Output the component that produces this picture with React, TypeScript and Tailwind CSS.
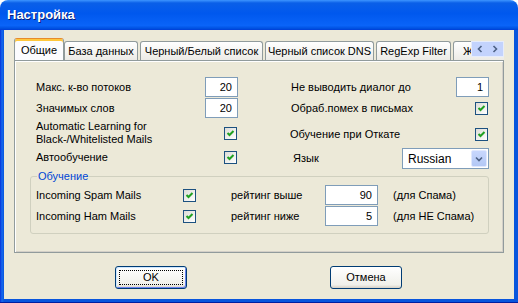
import React from "react";

const Check = () => (
  <span className="flex h-[13px] w-[13px] items-center justify-center border border-[#1c5180] bg-[linear-gradient(135deg,#dcdcd7,#ffffff)]">
    <svg width="9" height="9" viewBox="0 0 9 9">
      <path d="M1.5 4 L3.5 6 L7.5 2" fill="none" stroke="#21a121" strokeWidth="2" />
    </svg>
  </span>
);

const Field = ({ value, w }: { value: string; w: string }) => (
  <div
    className={`flex h-[20px] items-center justify-end border border-[#7f9db9] bg-white pr-[5px] ${w}`}
  >
    {value}
  </div>
);

const tabs = [
  { label: "База данных", w: "w-[74px]" },
  { label: "Черный/Белый список", w: "w-[123px]" },
  { label: "Черный список DNS", w: "w-[109px]" },
  { label: "RegExp Filter", w: "w-[75px]" },
  { label: "Журнал", w: "w-[60px]" },
];

const XpButton = ({ label, active }: { label: string; active?: boolean }) => (
  <button
    className={`relative flex h-[23px] w-[72px] items-center justify-center rounded-[3px] border border-[#003c74] bg-[linear-gradient(to_bottom,#ffffff,#f0f0ea_85%,#d6d0c5)] ${
      active
        ? "shadow-[inset_1px_1px_0_#cee7ff,inset_-1px_-1px_0_#6982ee]"
        : ""
    }`}
  >
    {active && (
      <span className="absolute inset-[3px] border border-dotted border-black" />
    )}
    {label}
  </button>
);

export default function App() {
  return (
    <div className="flex h-[303px] w-[518px] flex-col font-['Liberation_Sans',Arial,sans-serif] text-[11px] text-black">
      {/* title bar */}
      <div className="flex h-[30px] items-center rounded-t-[8px] bg-[linear-gradient(to_bottom,#3d95ff_0%,#0a5fe8_10%,#0058ee_45%,#0a64f8_85%,#0050e0_95%,#003dd7_100%)] pl-[7px]">
        <span className="text-[13px] font-bold text-white [text-shadow:1px_1px_0_#0a1e7a]">
          Настройка
        </span>
      </div>

      {/* frame */}
      <div className="flex flex-1 flex-col bg-[linear-gradient(to_right,#0831d9,#166aee_2px,#0855dd_4px)] px-[4px] pb-[4px] shadow-[inset_0_-1px_0_#001ea0]">
        <div className="flex flex-1 flex-col bg-[#ece9d8] pl-[10px] pt-[8px]">
          {/* tab strip */}
          <div className="relative flex h-[22px] w-[490px] items-end overflow-hidden">
            <div className="relative z-10 mb-[-1px] flex h-[23px] w-[50px] shrink-0 items-center justify-center rounded-t-[3px] border border-b-0 border-[#919b9c] border-t-[#e68b2c] bg-[#fcfcfe] shadow-[inset_0_2px_0_#ffc73c]">
              Общие
            </div>
            {tabs.map((t) => (
              <div
                key={t.label}
                className={`mr-[2px] flex h-[19px] shrink-0 items-center justify-center rounded-t-[3px] border border-b-0 border-[#919b9c] bg-[linear-gradient(to_bottom,#ffffff,#ecebe6)] ${t.w}`}
              >
                {t.label}
              </div>
            ))}
            <div className="absolute right-0 top-[3px] z-20 flex h-[16px] w-[33px] items-center justify-around border border-[#e6ecfb] bg-[#c3d3fd]">
              <svg width="6" height="8" viewBox="0 0 6 8">
                <path d="M4.5 1 L1.5 4 L4.5 7" fill="none" stroke="#4d6185" strokeWidth="1.6" />
              </svg>
              <svg width="6" height="8" viewBox="0 0 6 8">
                <path d="M1.5 1 L4.5 4 L1.5 7" fill="none" stroke="#4d6185" strokeWidth="1.6" />
              </svg>
            </div>
          </div>

          {/* panel */}
          <div className="flex h-[193px] w-[490px] flex-col border border-[#919b9c] bg-[#ece9d8] pt-[16px] shadow-[inset_1px_1px_0_#ffffff,inset_-1px_-1px_0_#d4d0c8]">
            <div className="flex pl-[21px]">
              {/* left column */}
              <div className="flex w-[202px] flex-col">
                <div className="flex h-[20px] items-center justify-between">
                  <span>Макс. к-во потоков</span>
                  <Field value="20" w="w-[33px]" />
                </div>
                <div className="mt-[1px] flex h-[20px] items-center justify-between">
                  <span>Значимых слов</span>
                  <Field value="20" w="w-[33px]" />
                </div>
                <div className="mt-[2px] flex h-[26px] items-center justify-between pr-[1px]">
                  <span className="leading-[13px]">
                    Automatic Learning for
                    <br />
                    Black-/Whitelisted Mails
                  </span>
                  <Check />
                </div>
                <div className="mt-[2px] flex h-[18px] items-center justify-between pr-[1px]">
                  <span>Автообучение</span>
                  <Check />
                </div>
              </div>

              {/* right column */}
              <div className="ml-[52px] flex w-[199px] flex-col">
                <div className="flex h-[20px] items-center justify-between pl-[1px]">
                  <span>Не выводить диалог до</span>
                  <Field value="1" w="w-[33px]" />
                </div>
                <div className="mt-[1px] flex h-[20px] items-center justify-between pl-[1px] pr-[1px]">
                  <span>Обраб.помех в письмах</span>
                  <Check />
                </div>
                <div className="mt-[6px] flex h-[20px] items-center justify-between pr-[1px]">
                  <span>Обучение при Откате</span>
                  <Check />
                </div>
                <div className="mt-[4px] flex h-[21px] items-center justify-between pl-[3px]">
                  <span>Язык</span>
                  <div className="flex h-[21px] w-[87px] items-center justify-between border border-[#7f9db9] bg-white pl-[5px] pr-[1px] text-[12px]">
                    <span>Russian</span>
                    <span className="flex h-[17px] w-[16px] items-center justify-center rounded-[2px] border border-[#e0e8fe] bg-[linear-gradient(to_bottom,#c8d7fd,#b3c8f5)]">
                      <svg width="8" height="6" viewBox="0 0 8 6">
                        <path d="M1 1.5 L4 4.5 L7 1.5" fill="none" stroke="#4d6185" strokeWidth="1.6" />
                      </svg>
                    </span>
                  </div>
                </div>
              </div>
            </div>

            {/* group box */}
            <fieldset className="ml-[15px] mt-[1px] w-[459px] rounded-[3px] border border-[#d0d0bf] pb-[7px] pl-[5px]">
              <legend className="ml-[1px] px-[1px] leading-[13px] text-[#0046d5]">
                Обучение
              </legend>
              <div className="mt-[2px] grid grid-cols-[147px_48px_94px_53px_auto] grid-rows-[20px_20px] items-center gap-y-[1px]">
                <span>Incoming Spam Mails</span>
                <Check />
                <span>рейтинг выше</span>
                <Field value="90" w="w-[53px]" />
                <span className="pl-[15px]">(для Спама)</span>
                <span>Incoming Ham Mails</span>
                <Check />
                <span>рейтинг ниже</span>
                <Field value="5" w="w-[53px]" />
                <span className="pl-[15px]">(для НЕ Спама)</span>
              </div>
            </fieldset>
          </div>

          {/* buttons */}
          <div className="mt-[13px] flex pl-[101px]">
            <XpButton label="OK" active />
            <div className="ml-[143px]">
              <XpButton label="Отмена" />
            </div>
          </div>
        </div>
      </div>
    </div>
  );
}
